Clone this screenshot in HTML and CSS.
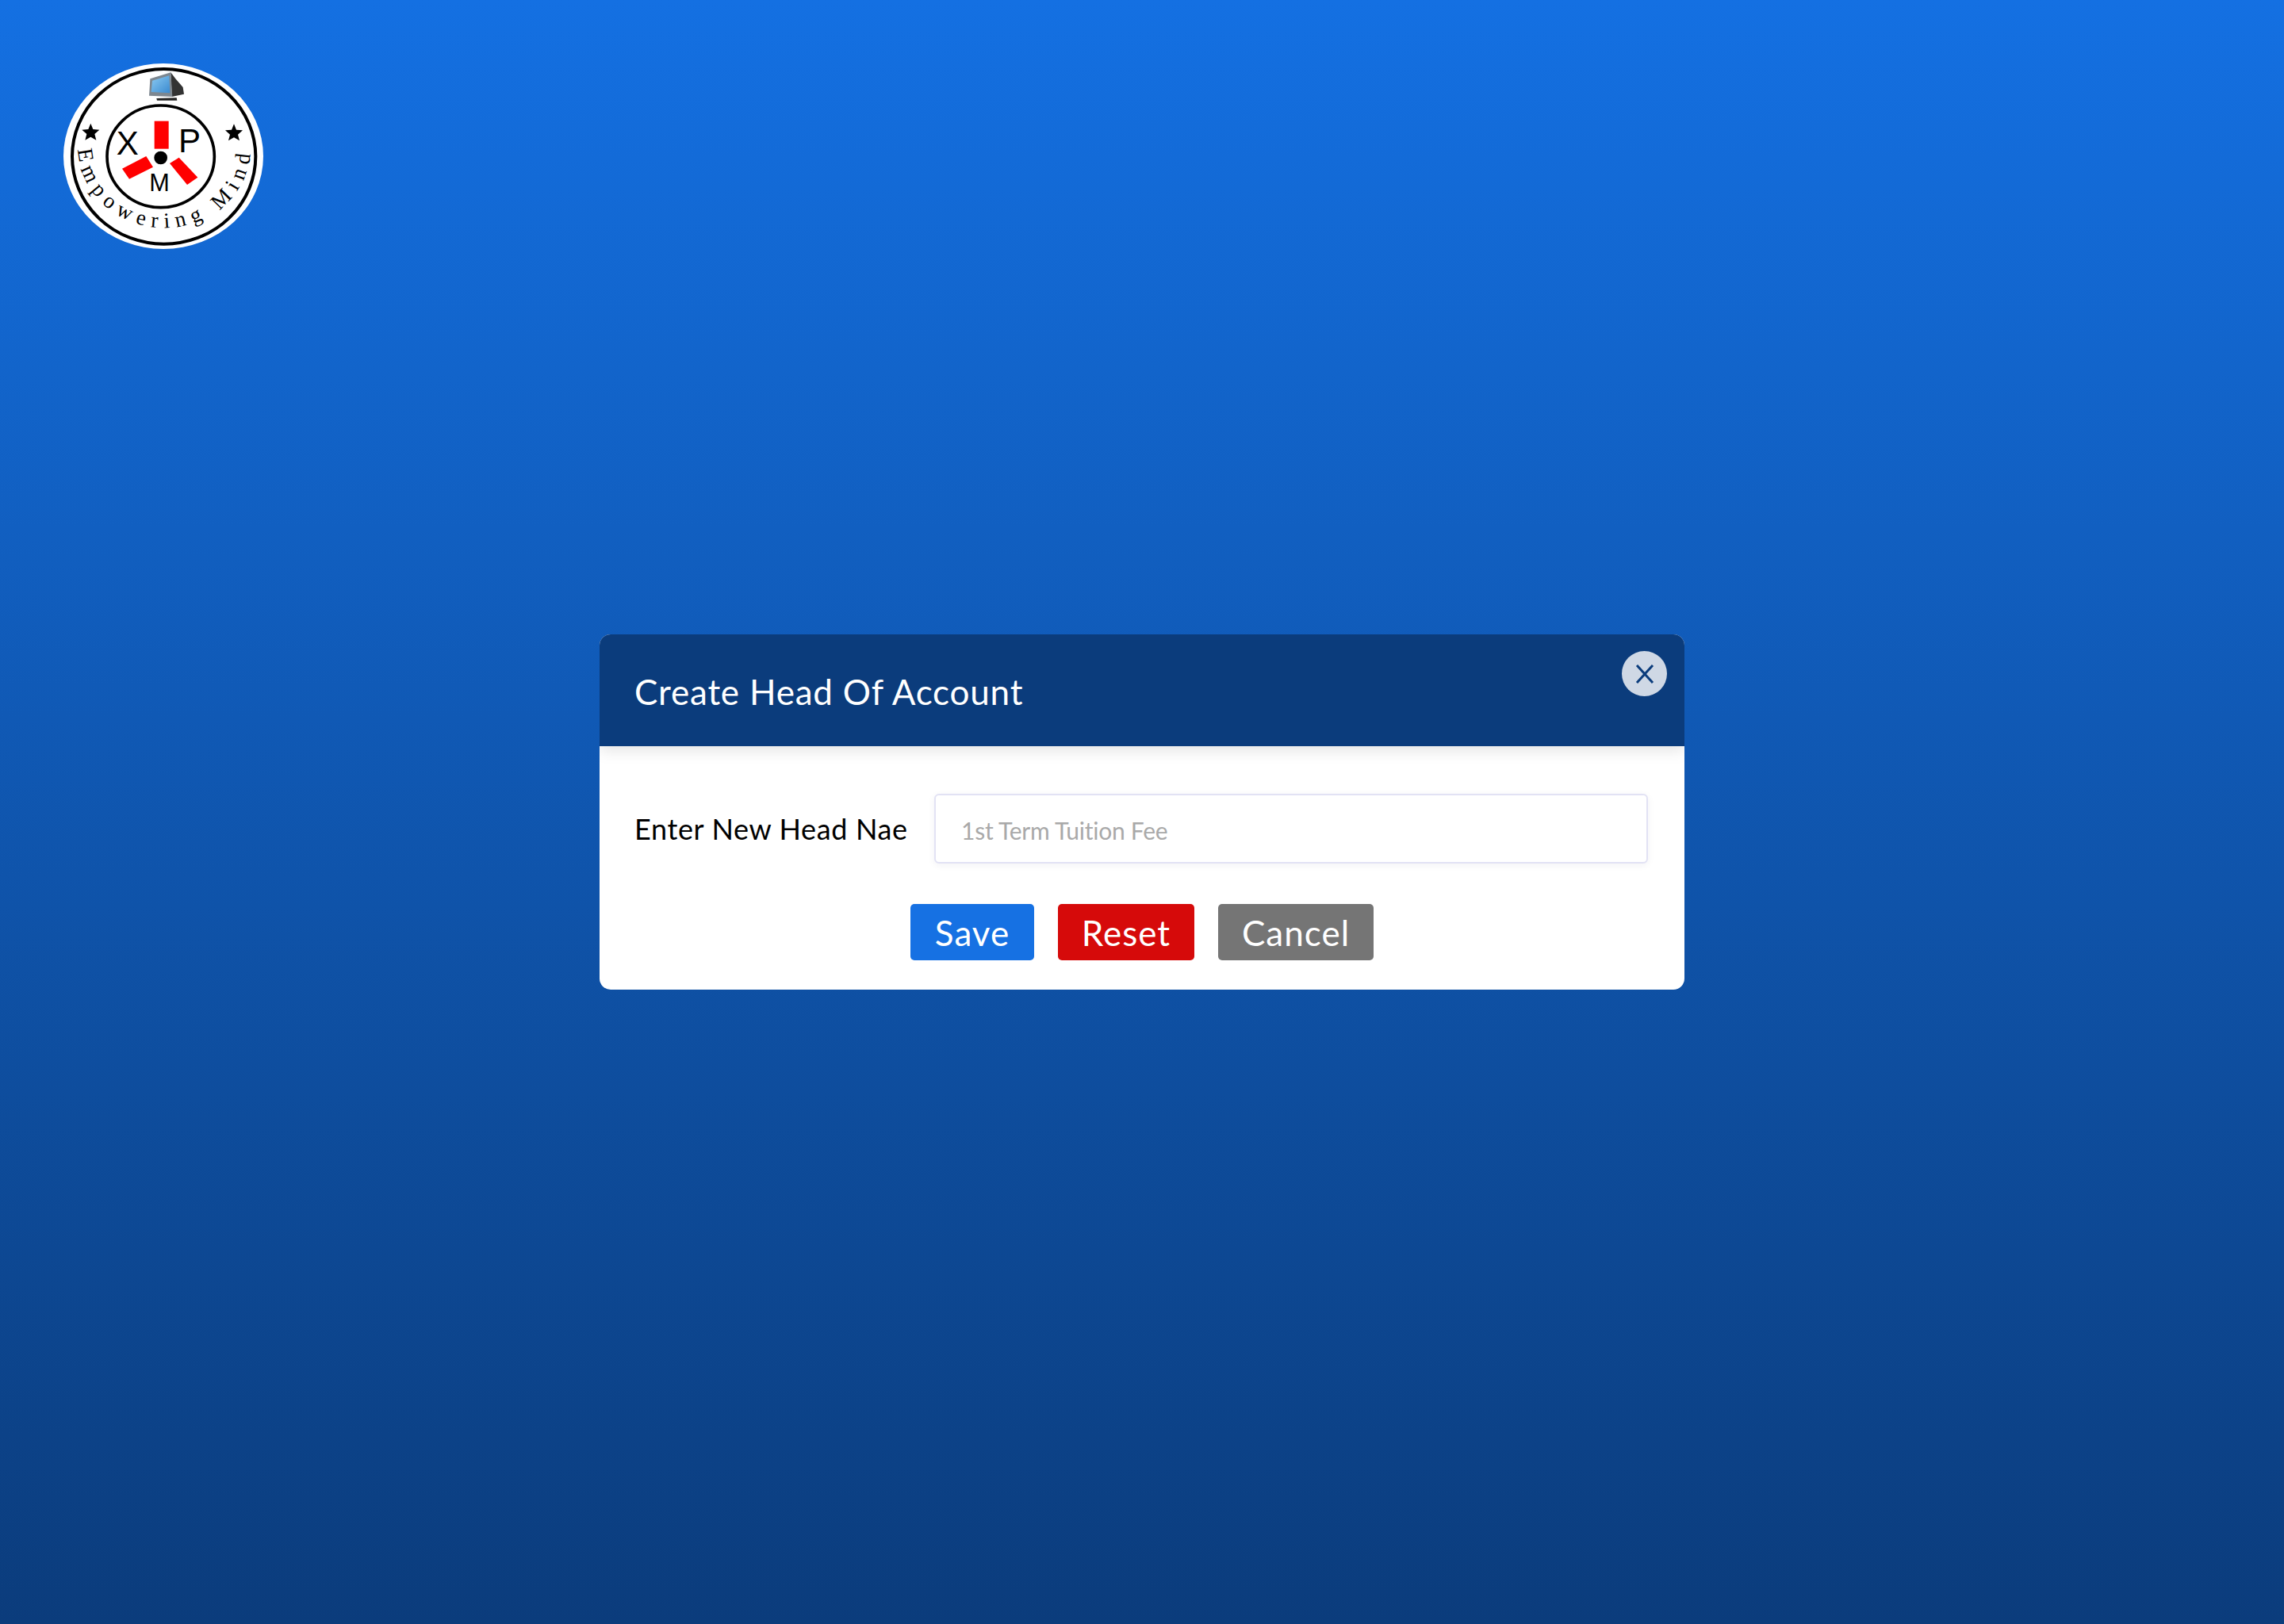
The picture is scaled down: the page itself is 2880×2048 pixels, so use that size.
FILE: index.html
```html
<!DOCTYPE html>
<html>
  <head>
    <meta charset="utf-8">
    <title>Create Head Of Account</title>
    <link rel="stylesheet" href="styles.css">
  </head>
  <body>
    <div class="page">
      <svg class="logo" viewBox="0 0 900 810" width="300" height="270" xmlns="http://www.w3.org/2000/svg">
        <defs>
          <linearGradient id="screen" x1="0" y1="0" x2="1" y2="1">
            <stop offset="0" stop-color="#8ccbf2"/>
            <stop offset="1" stop-color="#3a8ad0"/>
          </linearGradient>
        </defs>
        <ellipse cx="438" cy="411" rx="378" ry="351" fill="#fff"/>
        <ellipse cx="440" cy="412" rx="347" ry="331" fill="none" stroke="#000" stroke-width="12"/>
        <ellipse cx="428" cy="412" rx="203" ry="193" fill="none" stroke="#000" stroke-width="11"/>

        <!-- monitor -->
        <path d="M466 94 L484 118 L512 150 L516 176 L470 186 Z" fill="#333"/>
        <path d="M388 118 L466 94 L472 186 L384 182 Z" fill="#7d8790"/>
        <path d="M396 125 L460 106 L463 172 L392 168 Z" fill="url(#screen)"/>
        <path d="M412 192 L488 190 L490 200 L414 200 Z" fill="#222"/>

        <polygon points="163,287 172,309 196,311 178,327 184,350 163,338 142,350 148,327 130,311 154,309" fill="#000"/>
        <polygon points="705,289 714,311 738,313 720,329 726,352 705,340 684,352 690,329 672,313 696,311" fill="#000"/>

        <rect x="404" y="278" width="54" height="105" fill="#f00"/>
        <polygon points="282,458 373,411 399,452 309,497" fill="#f00"/>
        <polygon points="462,438 497,416 568,491 528,519" fill="#f00"/>
        <ellipse cx="428" cy="417" rx="25" ry="25" fill="#000"/>

        <text class="logo-letter" x="302" y="404" text-anchor="middle">X</text>
        <text class="logo-letter" x="537" y="395" text-anchor="middle">P</text>
        <text class="logo-letter logo-letter-m" x="423" y="543" text-anchor="middle">M</text>

        <path id="ring" d="M116 385 A 324 300 0 0 0 768 375" fill="none"/>
        <text class="logo-motto"><textPath href="#ring">Empowering Mind</textPath></text>
      </svg>

      <div class="modal">
        <div class="modal-header">
          <h2 class="modal-title">Create Head Of Account</h2>
          <button class="modal-close" type="button" aria-label="Close">
            <svg viewBox="0 0 24 24" width="24" height="24" xmlns="http://www.w3.org/2000/svg">
              <path d="M2 1 L22 23 M22 1 L2 23" fill="none" stroke="#0b3c7c" stroke-width="3"/>
            </svg>
          </button>
        </div>
        <form class="modal-body">
          <div class="form-row">
            <label class="form-label" for="head">Enter New Head Nae</label>
            <input class="form-input" id="head" type="text" placeholder="1st Term Tuition Fee">
          </div>
          <div class="form-actions">
            <button class="btn btn-save" type="button">Save</button>
            <button class="btn btn-reset" type="button">Reset</button>
            <button class="btn btn-cancel" type="button">Cancel</button>
          </div>
        </form>
      </div>
    </div>
  </body>
</html>
```

FILE: styles.css
```css
html, body {
  margin: 0;
  height: 100%;
}
body {
  font-family: Lato, "Open Sans", sans-serif;
  font-variant-ligatures: none;
  background: linear-gradient(180deg, #1470e2 0%, #0b3c7c 100%);
}
.page {
  display: grid;
  height: 100%;
}
.logo {
  grid-area: 1 / 1;
  align-self: start;
  justify-self: start;
  margin: 60px 0 0 60px;
}
.logo-letter {
  font-family: "Liberation Sans", sans-serif;
  font-size: 126px;
}
.logo-letter-m {
  font-size: 92px;
}
.logo-motto {
  font-family: "Liberation Serif", serif;
  font-size: 82px;
  letter-spacing: 24px;
}
.modal {
  grid-area: 1 / 1;
  align-self: center;
  justify-self: center;
  width: 1368px;
  height: 448px;
  background: #fff;
  border-radius: 14px;
  overflow: hidden;
}
.modal-header {
  display: flex;
  justify-content: space-between;
  height: 141px;
  padding: 0 22px 0 44px;
  box-sizing: border-box;
  background: #0b3c7c;
  box-shadow: 0 6px 18px rgba(0, 0, 0, 0.1);
}
.modal-title {
  margin: 0;
  align-self: center;
  padding-top: 3px;
  font-size: 44px;
  font-weight: 400;
  letter-spacing: 0.8px;
  color: #fff;
}
.modal-close {
  display: flex;
  align-items: center;
  justify-content: center;
  width: 57px;
  height: 57px;
  margin-top: 21px;
  padding: 0;
  border: 0;
  border-radius: 50%;
  background: #cfd8e5;
}
.modal-body {
  margin: 0;
  padding: 60px 46px 0 44px;
}
.form-row {
  display: flex;
  align-items: center;
  justify-content: space-between;
}
.form-label {
  font-size: 36px;
  letter-spacing: 0.65px;
  color: #000;
}
.form-input {
  width: 900px;
  height: 88px;
  box-sizing: border-box;
  padding: 3px 32px 0;
  border: 2px solid #e2e2f4;
  border-radius: 6px;
  background: #fff;
  box-shadow: 0 2px 10px rgba(30, 30, 90, 0.06);
  font-family: inherit;
  font-size: 30px;
  letter-spacing: -0.25px;
  outline: 0;
}
.form-input::placeholder {
  color: #a9a9a9;
  opacity: 1;
}
.form-actions {
  display: flex;
  justify-content: center;
  gap: 30px;
  margin-top: 51px;
  padding-left: 2px;
}
.btn {
  height: 71px;
  padding: 1px 0 0;
  border: 0;
  border-radius: 5px;
  font-family: inherit;
  font-size: 44px;
  letter-spacing: 1px;
  color: #fff;
}
.btn-save {
  width: 156px;
  background: #1671e3;
}
.btn-reset {
  width: 172px;
  background: #d60a0a;
}
.btn-cancel {
  width: 196px;
  background: #757575;
}
```
